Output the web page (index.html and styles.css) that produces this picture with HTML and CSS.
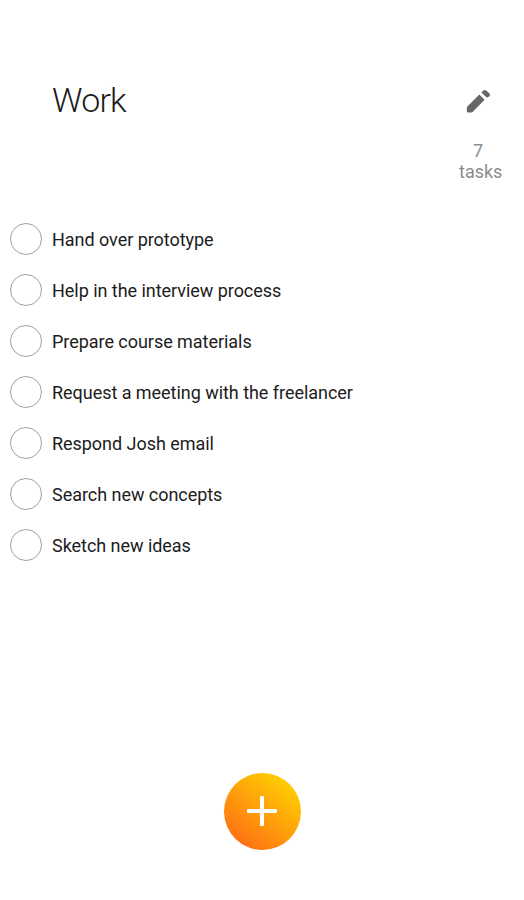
FILE: index.html
```html
<!DOCTYPE html>
<html lang="en">
<head>
    <meta charset="UTF-8">
    <title>Work</title>
    <link rel="stylesheet" href="styles.css">
</head>
<body>
    <div class="app">
        <header class="header">
            <h1 class="title">Work</h1>
            <button class="edit-btn" aria-label="Edit">
                <svg width="32" height="32" viewBox="0 0 32 32" fill="#666">
                    <path d="M17.4 8.6L5.4 20.6Q4.8 21.2 4.8 22V25.3Q4.8 26.6 6.1 26.6H9.2Q10 26.6 10.6 26L22.6 13.8z"/>
                    <path d="M19.4 6.6L21.4 4.6Q22.8 3.4 24.2 4.6L27.4 7.6Q28.8 9 27.5 10.2L24.9 11.8z"/>
                </svg>
            </button>
        </header>
        <div class="counter">
            <span class="count">7</span>
            <span>tasks</span>
        </div>

        <ul class="task-list">
            <li class="task"><span class="check"></span><span class="name">Hand over prototype</span></li>
            <li class="task"><span class="check"></span><span class="name">Help in the interview process</span></li>
            <li class="task"><span class="check"></span><span class="name">Prepare course materials</span></li>
            <li class="task"><span class="check"></span><span class="name">Request a meeting with the freelancer</span></li>
            <li class="task"><span class="check"></span><span class="name">Respond Josh email</span></li>
            <li class="task"><span class="check"></span><span class="name">Search new concepts</span></li>
            <li class="task"><span class="check"></span><span class="name">Sketch new ideas</span></li>
        </ul>

        <div class="footer">
            <button class="add-btn" aria-label="Add task">
                <svg width="32" height="32" viewBox="0 0 32 32" fill="#fff">
                    <rect x="14" y="1" width="4" height="30" rx="1.2"/>
                    <rect x="1" y="14" width="30" height="4" rx="1.2"/>
                </svg>
            </button>
        </div>
    </div>
</body>
</html>
```
FILE: styles.css
```css
* {
    box-sizing: border-box;
}
body {
    margin: 0;
    background: #fff;
    font-family: Roboto, "Liberation Sans", sans-serif;
    color: #1c1c1c;
}
.app {
    display: flex;
    flex-direction: column;
    height: 900px;
    padding-top: 80px;
}
button {
    display: flex;
    align-items: center;
    justify-content: center;
    padding: 0;
    border: none;
    background: none;
    cursor: pointer;
}
.header {
    display: flex;
    align-items: center;
    justify-content: space-between;
    height: 40px;
    padding: 0 30px 0 52px;
}
.title {
    margin: 0;
    font-size: 34px;
    font-weight: 300;
    line-height: 40px;
    letter-spacing: -0.8px;
}
.edit-btn {
    margin-top: 4px;
}
.counter {
    display: flex;
    flex-direction: column;
    align-self: flex-end;
    width: 43px;
    margin: 20px 22px 0 0;
    font-size: 18px;
    line-height: 21px;
    color: #8c8c8c;
}
.count {
    padding-left: 14px;
}
.task-list {
    margin: 32px 0 0;
    padding: 0;
    list-style: none;
}
.task {
    display: flex;
    align-items: center;
    height: 50.95px;
    padding-left: 10px;
}
.check {
    width: 32px;
    height: 32px;
    border: 1px solid #a0a0a0;
    border-radius: 50%;
}
.name {
    margin: 2px 0 0 10px;
    font-size: 18px;
    line-height: 22px;
    letter-spacing: -0.04px;
}
.footer {
    display: flex;
    justify-content: center;
    margin-top: auto;
    padding-bottom: 50px;
}
.add-btn {
    width: 77px;
    height: 77px;
    padding-bottom: 1px;
    border-radius: 50%;
    background: linear-gradient(38deg, #ff6a14 8%, #ff9a0c 45%, #ffd800 95%);
}
```
